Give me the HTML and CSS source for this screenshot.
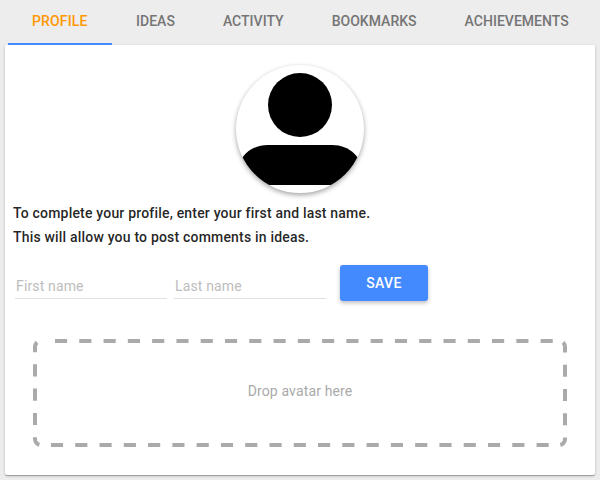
FILE: index.html
```
<!DOCTYPE html>
<html lang="en">
<head>
<meta charset="utf-8">
<title>Profile</title>
<link rel="stylesheet" href="styles.css">
</head>
<body>
<nav class="tabs">
  <a class="tab active">Profile</a>
  <a class="tab">Ideas</a>
  <a class="tab">Activity</a>
  <a class="tab">Bookmarks</a>
  <a class="tab">Achievements</a>
</nav>
<main class="card">
  <div class="avatar">
    <svg width="128" height="128" viewBox="0 0 128 128">
      <circle cx="64" cy="40" r="32"/>
      <path d="M0 120V108C3 92 14 80 32 80H96C114 80 125 92 128 108V120Z"/>
    </svg>
  </div>
  <div class="intro">
    <p>To complete your profile, enter your first and last name.</p>
    <p>This will allow you to post comments in ideas.</p>
  </div>
  <form class="names">
    <input class="field" type="text" placeholder="First name">
    <input class="field" type="text" placeholder="Last name">
    <button class="save" type="button">Save</button>
  </form>
  <div class="drop">
    <svg class="outline" width="534" height="108" viewBox="0 0 534 108">
      <clipPath id="edge"><rect width="534" height="108" rx="8"/></clipPath>
      <path clip-path="url(#edge)" d="M22 0H526A8 8 0 0 1 534 8V100A8 8 0 0 1 526 108H8A8 8 0 0 1 0 100V8A8 8 0 0 1 8 0H10"/>
    </svg>
    Drop avatar here
  </div>
</main>
</body>
</html>
```

FILE: styles.css
```
* { box-sizing: border-box; }
body {
  margin: 0;
  height: 480px;
  overflow: hidden;
  background: #ededed;
  color: rgba(0, 0, 0, 0.87);
  font-family: Roboto, sans-serif;
  font-size: 14px;
  letter-spacing: 0.14px;
}
.tabs {
  display: flex;
  height: 45px;
  padding-left: 8px;
}
.tab {
  padding: 11px 24px 0;
  line-height: 20px;
  font-weight: 500;
  letter-spacing: 0.02px;
  text-transform: uppercase;
  color: #757575;
}
.tab.active {
  width: 104px;
  letter-spacing: 0.14px;
  color: #ff9800;
  border-bottom: 2px solid #448aff;
}
.card {
  height: 430px;
  margin: 0 5px;
  padding: 20px 8px 0;
  border-radius: 2px;
  background: #fff;
  box-shadow: 0 1px 3px rgba(0, 0, 0, 0.2), 0 1px 1px rgba(0, 0, 0, 0.14), 0 2px 1px -1px rgba(0, 0, 0, 0.12);
}
.avatar {
  width: 128px;
  height: 128px;
  margin: 0 auto 8px;
  border-radius: 50%;
  overflow: hidden;
  box-shadow: 0 2px 5px rgba(0, 0, 0, 0.36);
}
.avatar svg { display: block; }
.intro p {
  margin: 0;
  line-height: 24px;
  font-weight: 500;
  letter-spacing: 0.19px;
}
.names {
  display: flex;
  margin: 16px 0 38px 2px;
}
.field {
  width: 152px;
  height: 30px;
  margin: 4px 7px 0 0;
  padding: 4px 1px 0;
  border: 0;
  border-bottom: 1px solid #e0e0e0;
  background: none;
  font: inherit;
  letter-spacing: inherit;
}
.field::placeholder { color: #bdbdbd; }
.save {
  width: 88px;
  height: 36px;
  margin-left: 7px;
  border: 0;
  border-radius: 3px;
  background: #448aff;
  color: #fff;
  font: 500 14px Roboto, sans-serif;
  letter-spacing: 0.4px;
  text-transform: uppercase;
  box-shadow: 0 2px 4px rgba(0, 0, 0, 0.26);
}
.drop {
  position: relative;
  height: 108px;
  margin: 0 20px;
  color: #aaa;
  line-height: 104px;
  text-align: center;
}
.outline {
  position: absolute;
  inset: 0;
  fill: none;
  stroke: #aaa;
  stroke-width: 8;
  stroke-dasharray: 12.14 12.14;
}
```
